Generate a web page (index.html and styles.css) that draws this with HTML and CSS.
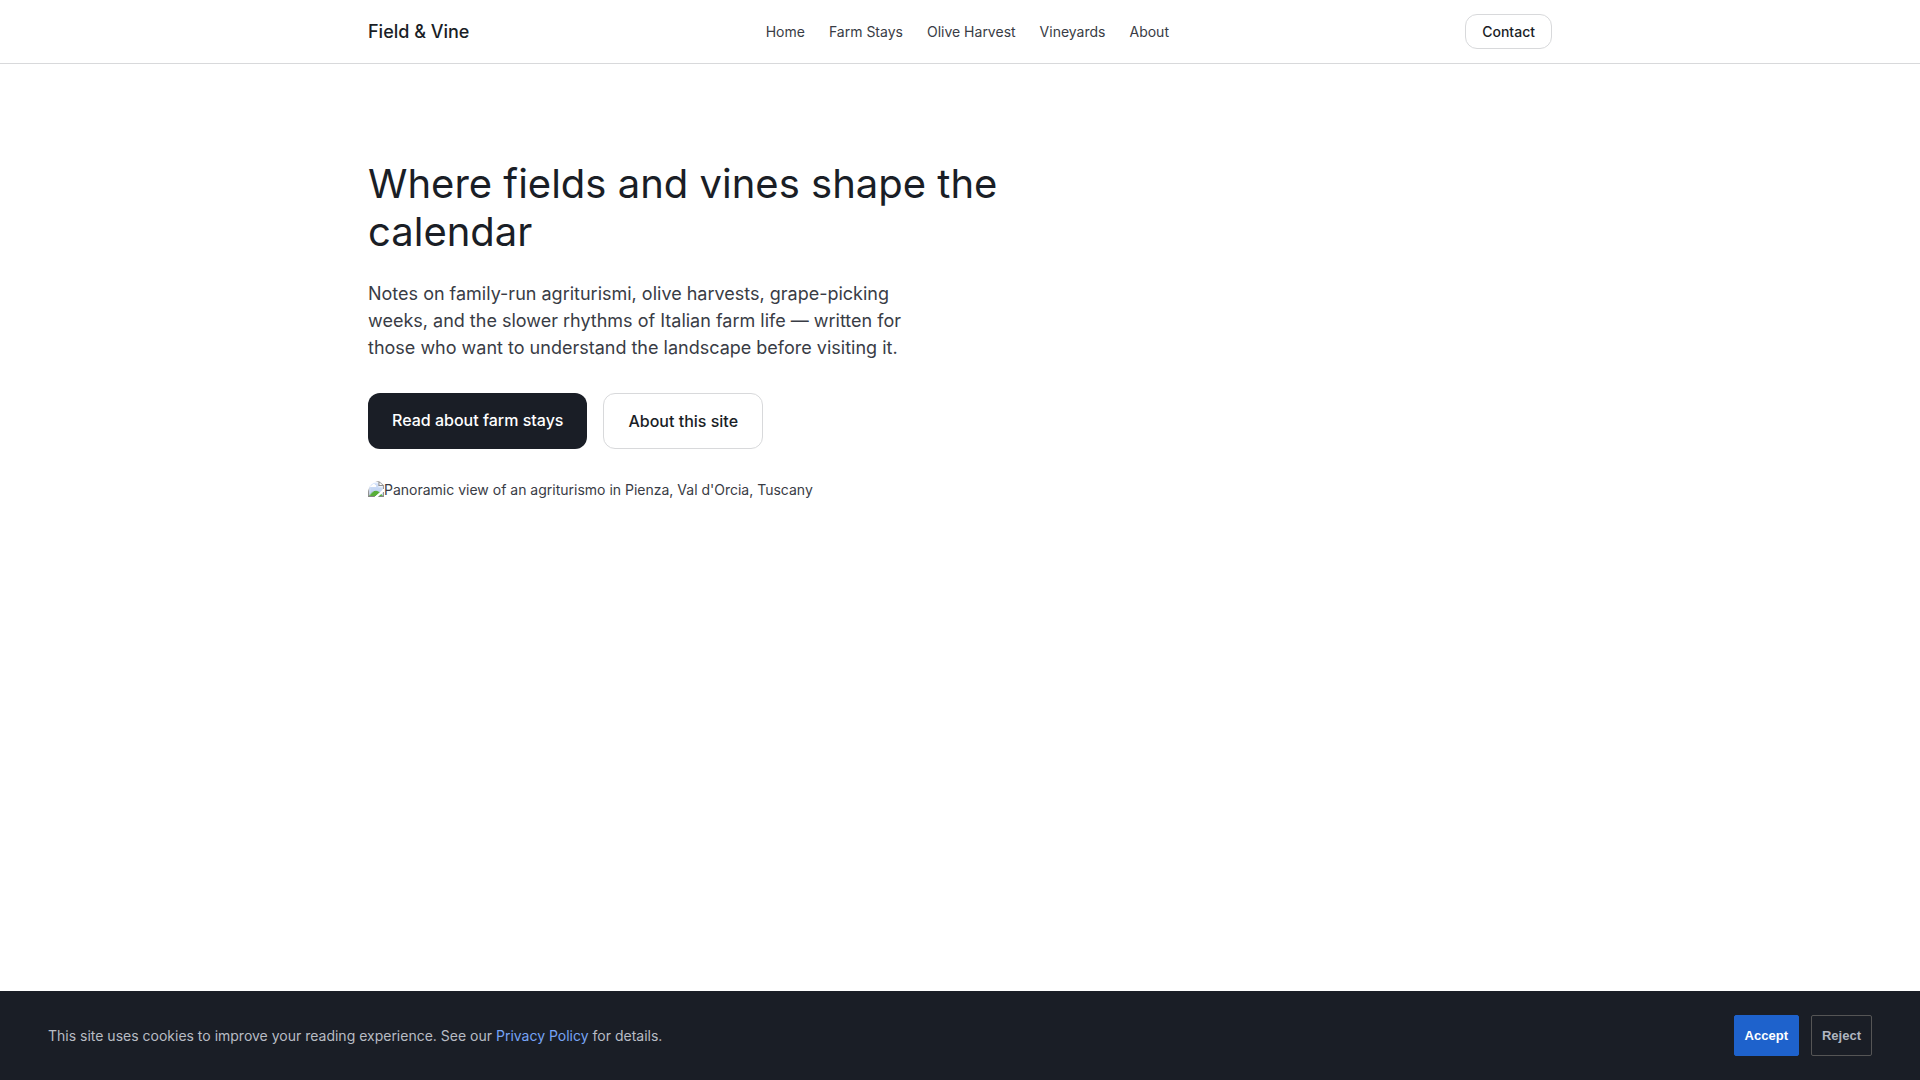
FILE: index.html
```html
<!DOCTYPE html>
<html lang="en">
<head>
  <meta charset="UTF-8" />
  <title>Field &amp; Vine</title>
  <meta name="viewport" content="width=device-width, initial-scale=1.0"/>
  <link rel="stylesheet" href="styles.css">
</head>
<body>

<header class="site-header">
  <div class="container header-inner">
    <a class="brand" href="#">Field &amp; Vine</a>
    <nav class="nav">
      <a href="#">Home</a>
      <a href="#farm-stays">Farm Stays</a>
      <a href="#olive-harvest">Olive Harvest</a>
      <a href="#vineyards">Vineyards</a>
      <a href="#about">About</a>
    </nav>
    <a class="btn btn-small" href="#contact">Contact</a>
  </div>
</header>

<main class="container hero">
  <h1>Where fields and vines shape the calendar</h1>
  <p class="lead">Notes on family-run agriturismi, olive harvests, grape-picking weeks, and the slower rhythms of Italian farm life — written for those who want to understand the landscape before visiting it.</p>
  <div class="actions">
    <a class="btn btn-primary" href="#farm-stays">Read about farm stays</a>
    <a class="btn" href="#about">About this site</a>
  </div>
  <figure class="hero-image">
    <img src="hero.jpg" alt="Panoramic view of an agriturismo in Pienza, Val d'Orcia, Tuscany">
  </figure>
</main>

<!-- Cookie notice -->
<div class="cookie-banner">
  <p>This site uses cookies to improve your reading experience. See our <a href="#privacy">Privacy Policy</a> for details.</p>
  <div class="cookie-actions">
    <button class="accept" type="button">Accept</button>
    <button class="reject" type="button">Reject</button>
  </div>
</div>

</body>
</html>
```

FILE: styles.css
```css
* {
  box-sizing: border-box;
}

body {
  margin: 0;
  font-family: Inter, sans-serif;
  font-size: 14px;
  line-height: 20px;
  color: #393c45;
  background-color: #fff;
}

a {
  color: inherit;
  text-decoration: none;
}

.container {
  max-width: 1232px;
  margin: 0 auto;
  padding: 0 24px;
}

.site-header {
  border-bottom: 1px solid #d8d9db;
}

.header-inner {
  display: flex;
  align-items: center;
  justify-content: space-between;
  height: 63px;
}

.brand {
  font-size: 18px;
  font-weight: 500;
  line-height: 27px;
  color: #1a1e26;
}

.nav {
  display: flex;
  gap: 24px;
}

.btn {
  display: block;
  padding: 15px 24px;
  font-size: 16px;
  font-weight: 500;
  line-height: 24px;
  color: #1a1e26;
  border: 1px solid #d8d9db;
  border-radius: 12px;
}

.btn-small {
  padding: 6px 16px;
  font-size: 14px;
  line-height: 21px;
}

.btn-primary {
  color: #fff;
  background-color: #1a1e26;
  border: none;
}

.hero {
  padding-top: 96px;
  padding-bottom: 96px;
}

.hero h1 {
  max-width: 720px;
  margin: 0 0 24px;
  font-size: 40px;
  font-weight: 400;
  line-height: 48px;
  color: #1a1e26;
}

.lead {
  max-width: 560px;
  margin: 0 0 32px;
  font-size: 18px;
  line-height: 27px;
}

.actions {
  display: flex;
  gap: 16px;
  margin-bottom: 32px;
}

.hero-image {
  min-height: 240px;
  margin: 0;
  line-height: 18px;
  border-radius: 12px;
  overflow: hidden;
}

.hero-image img {
  display: block;
  max-width: 100%;
}

.cookie-banner {
  position: fixed;
  left: 0;
  right: 0;
  bottom: 0;
  display: flex;
  align-items: center;
  justify-content: space-between;
  gap: 24px;
  padding: 24px 48px;
  color: #b8bcc4;
  background-color: #1a1e26;
}

.cookie-banner p {
  margin: 0;
}

.cookie-banner a {
  color: #77a4f6;
}

.cookie-actions {
  display: flex;
  gap: 12px;
}

.cookie-actions button {
  height: 41px;
  padding: 0 10px;
  font: bold 13px "Liberation Sans", sans-serif;
  border: 1px solid #1e62cc;
  border-radius: 2px;
  cursor: pointer;
}

.cookie-actions .accept {
  color: #fff;
  background-color: #1e62cc;
}

.cookie-actions .reject {
  color: #b0b5c0;
  background-color: transparent;
  border-color: #555;
}
```
